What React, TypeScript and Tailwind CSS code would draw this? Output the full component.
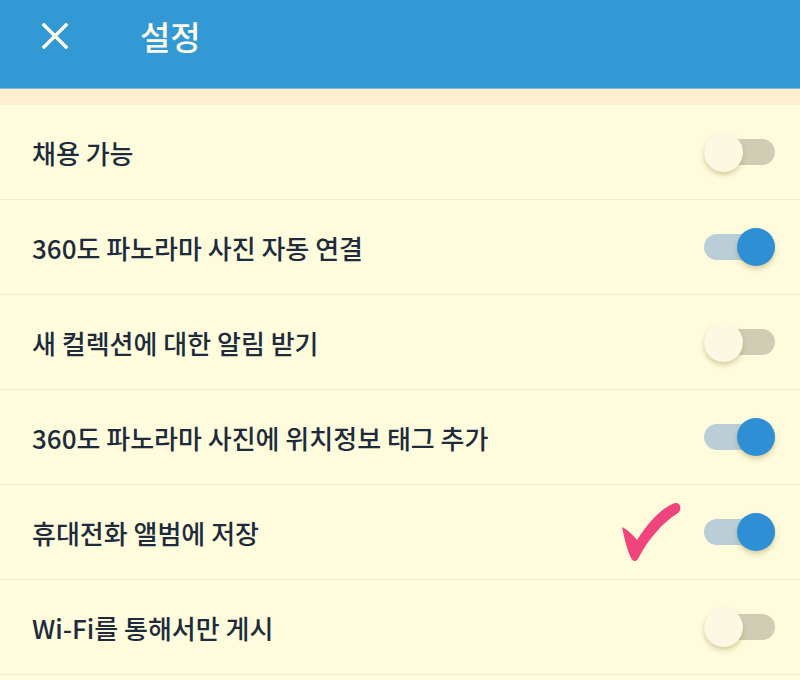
import { useState } from 'react';

const settings = [
  { label: '채용 가능', on: false },
  { label: '360도 파노라마 사진 자동 연결', on: true },
  { label: '새 컬렉션에 대한 알림 받기', on: false },
  { label: '360도 파노라마 사진에 위치정보 태그 추가', on: true },
  { label: '휴대전화 앨범에 저장', on: true, mark: true },
  { label: 'Wi-Fi를 통해서만 게시', on: false },
];

function Toggle({ on, onClick }: { on: boolean; onClick: () => void }) {
  return (
    <button onClick={onClick} className="w-[71px] h-[40px] shrink-0 flex items-center">
      <span
        className={
          on
            ? 'flex w-full h-[26px] items-center justify-end rounded-full bg-[#b9ced6]'
            : 'flex w-full h-[26px] items-center justify-start rounded-full bg-[#cfceb4]'
        }
      >
        <span
          className={
            on
              ? 'w-[38px] h-[38px] shrink-0 rounded-full bg-[#2f8fd5] shadow-[0_3px_5px_rgba(150,120,40,0.35)]'
              : 'w-[39px] h-[39px] shrink-0 rounded-full bg-[#fdf8e4] shadow-[0_3px_5px_rgba(150,120,40,0.35)]'
          }
        />
      </span>
    </button>
  );
}

// pink hand-drawn tick over the "save to album" row
function CheckMark() {
  return (
    <svg
      className="absolute left-[610px] top-[10px]"
      width="75"
      height="70"
      viewBox="0 0 75 70"
    >
      <path
        d="M12 32 C14 42, 17 55, 21 63 C23 67, 27 67, 29 62 C38 45, 52 28, 68 18 C72 15, 71 7, 65 8 C51 13, 38 28, 27 45 C23 40, 18 35, 12 32 Z"
        fill="#f0447c"
      />
    </svg>
  );
}

export default function App() {
  const [items, setItems] = useState(settings);

  const flip = (i: number) =>
    setItems(items.map((s, j) => (j === i ? { ...s, on: !s.on } : s)));

  return (
    <div
      className="w-[800px] h-[680px] overflow-hidden bg-[#fefcdd]"
      style={{ fontFamily: '"Noto Sans CJK KR", "Noto Sans", sans-serif' }}
    >
      {/* header */}
      <div className="h-[89px] bg-[#3399d4] border-b border-[#8fb9c9]">
        <div className="h-[72px] flex items-center pl-[42px] gap-[72px]">
          <svg width="26" height="26" viewBox="0 0 26 26">
            <path d="M2 2 L24 24 M24 2 L2 24" stroke="#fffbe6" strokeWidth="3.4" strokeLinecap="square" />
          </svg>
          <h1 className="text-[33px] font-medium leading-none text-[#fffbe6]">설정</h1>
        </div>
      </div>
      <div className="h-[16px] bg-[#fcf0d0]" />

      {/* rows */}
      {items.map((s, i) => (
        <div
          key={s.label}
          className="relative h-[95px] flex items-center justify-between pl-[32px] pr-[25px] border-b border-[#f1eccf]"
        >
          <span className="text-[26px] font-medium text-[#1d2b3c]">{s.label}</span>
          {s.mark && <CheckMark />}
          <Toggle on={s.on} onClick={() => flip(i)} />
        </div>
      ))}
    </div>
  );
}
